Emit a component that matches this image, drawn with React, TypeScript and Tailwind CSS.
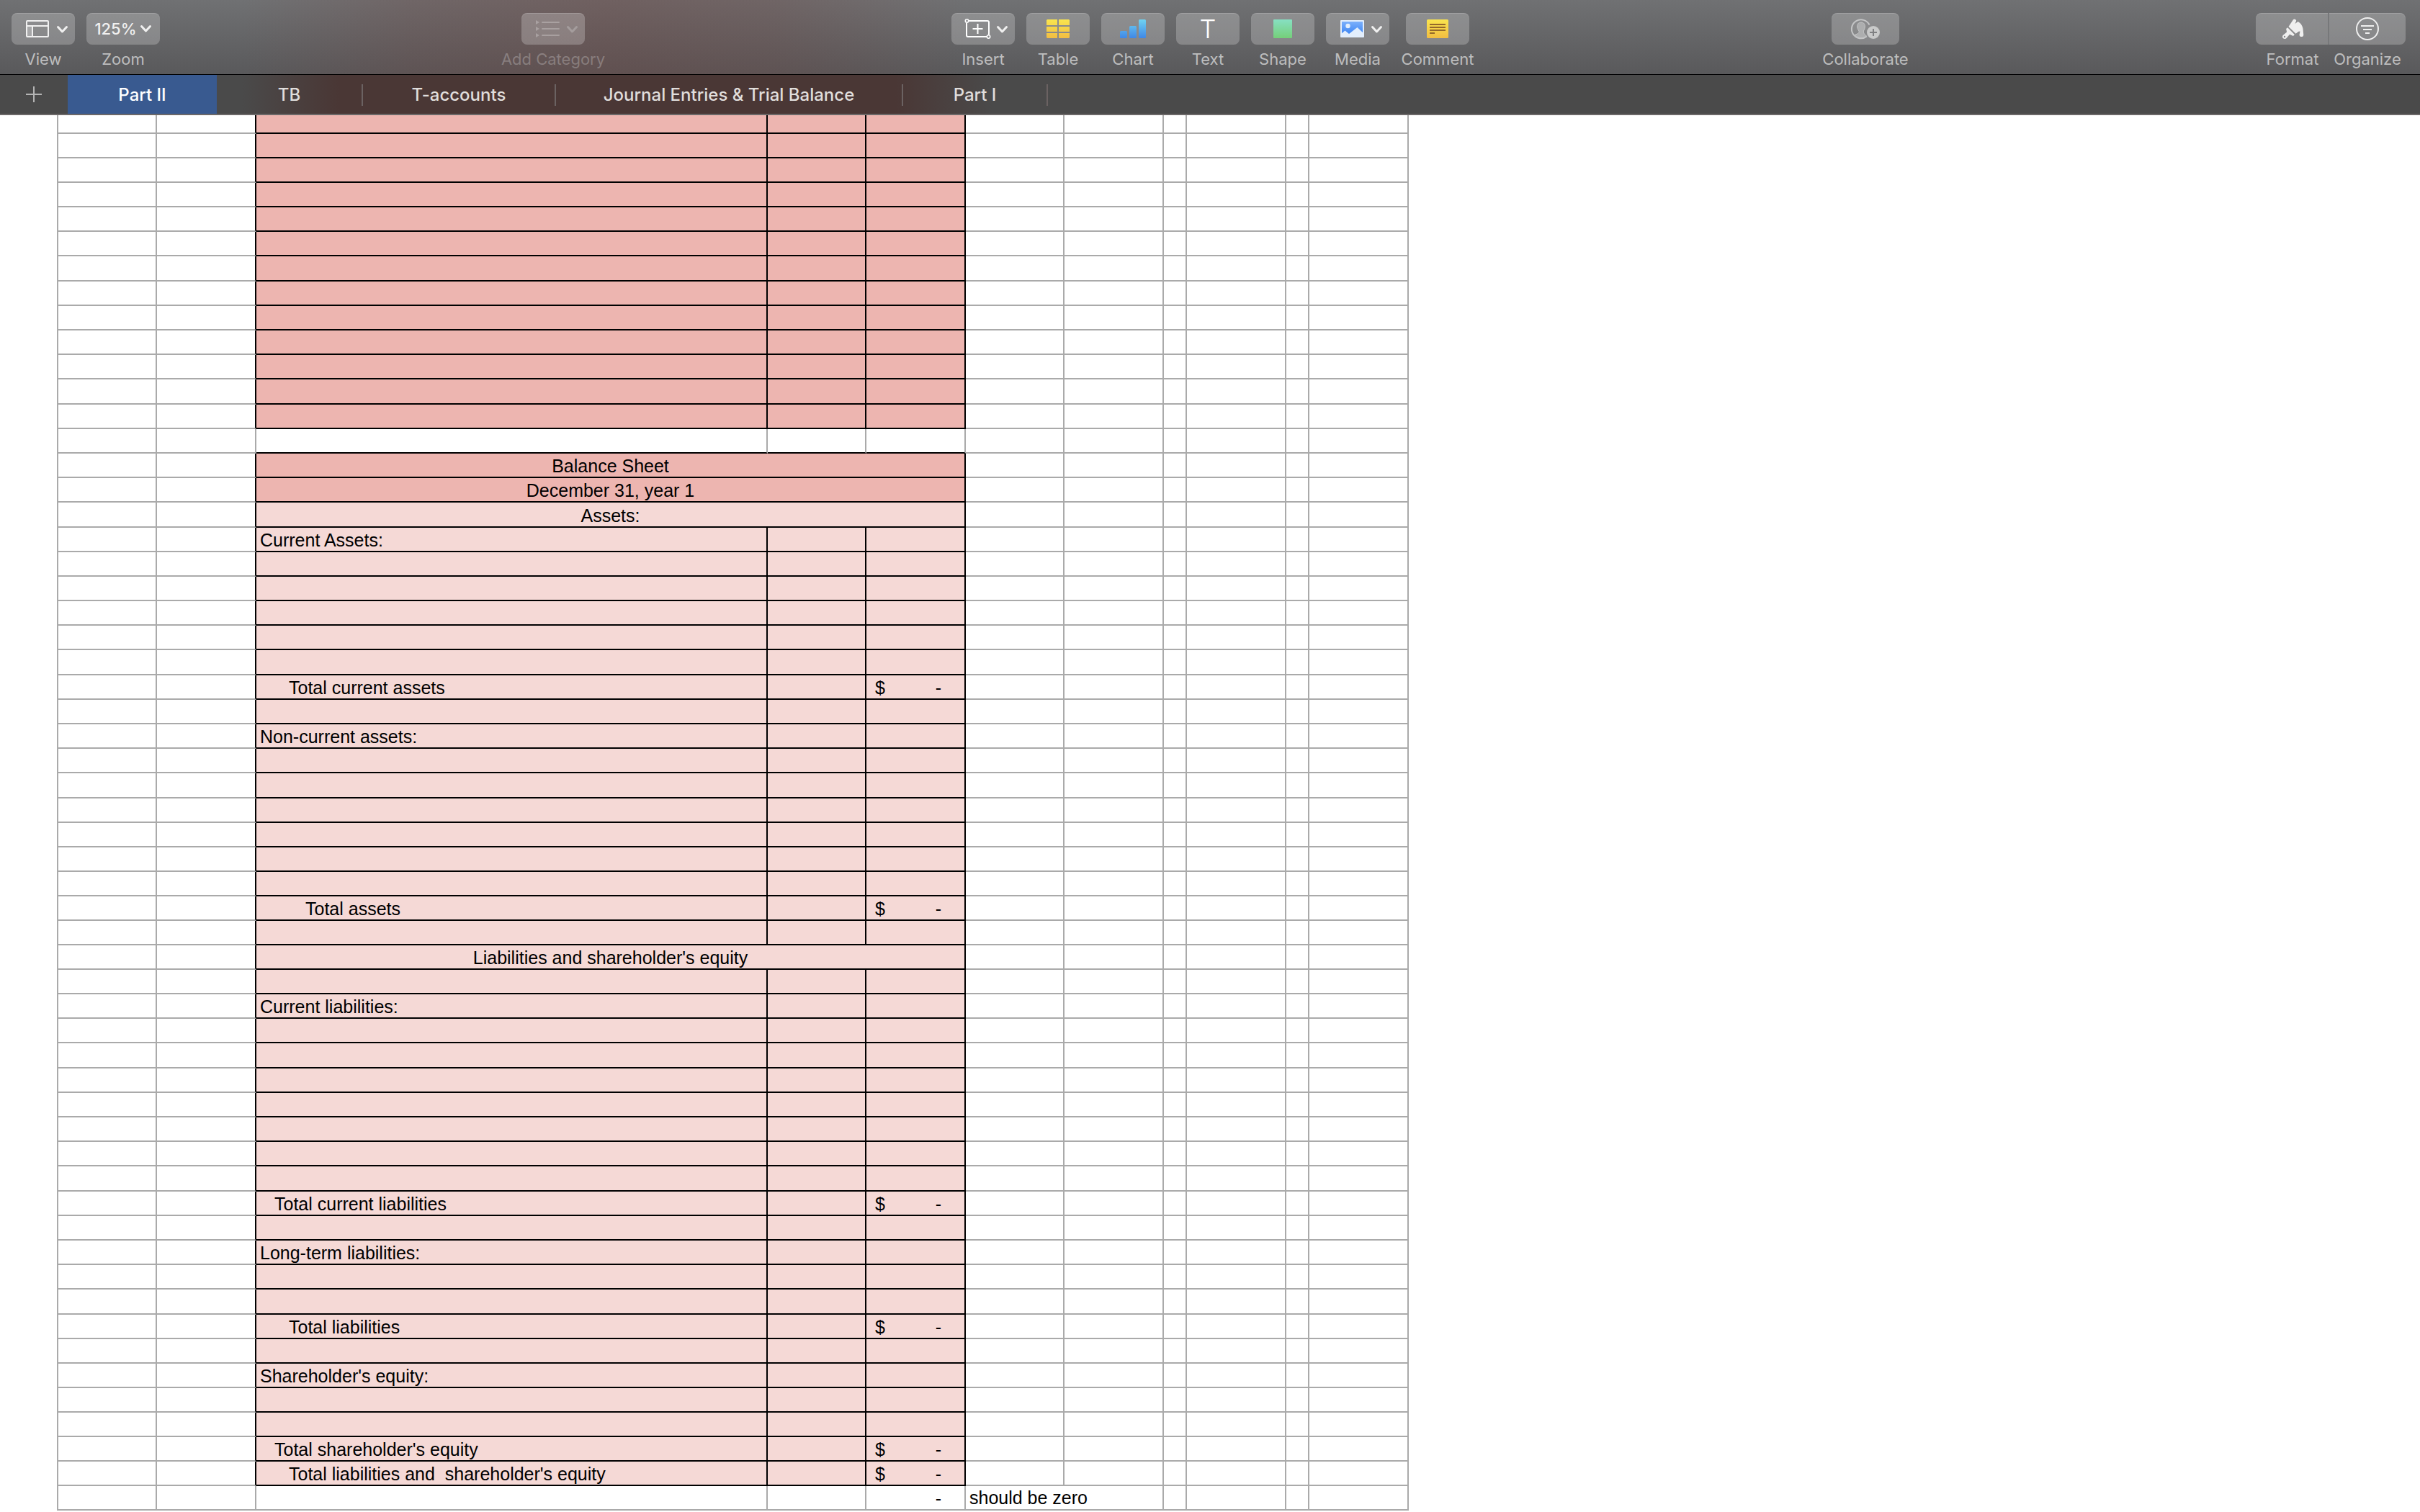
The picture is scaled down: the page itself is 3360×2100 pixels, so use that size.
import type { ReactNode } from "react";
import clsx from "clsx";

type Fill = "deep" | "light" | "none";

type SheetRow = {
  fill: Fill;
  label?: string;
  indent?: string;
  merged?: boolean;
  total?: string;
  note?: string;
  height?: string;
};

const TALL = "h-[35px]";

const blank = (fill: Fill, count: number): SheetRow[] =>
  Array.from({ length: count }, () => ({ fill }));

const rows: SheetRow[] = [
  { fill: "deep", height: "h-[26px]" },
  ...blank("deep", 5),
  { fill: "deep", height: TALL },
  ...blank("deep", 4),
  { fill: "deep", height: TALL },
  { fill: "deep" },
  { fill: "none" },
  { fill: "deep", label: "Balance Sheet", merged: true },
  { fill: "deep", label: "December 31, year 1", merged: true },
  { fill: "light", label: "Assets:", merged: true, height: TALL },
  { fill: "light", label: "Current Assets:" },
  ...blank("light", 4),
  { fill: "light", height: TALL },
  { fill: "light", label: "Total current assets", indent: "pl-[45px]", total: "$" },
  ...blank("light", 1),
  { fill: "light", label: "Non-current assets:" },
  ...blank("light", 1),
  { fill: "light", height: TALL },
  ...blank("light", 4),
  { fill: "light", label: "Total assets", indent: "pl-[68px]", total: "$" },
  ...blank("light", 1),
  { fill: "light", label: "Liabilities and shareholder's equity", merged: true },
  ...blank("light", 1),
  { fill: "light", label: "Current liabilities:" },
  ...blank("light", 1),
  { fill: "light", height: TALL },
  ...blank("light", 4),
  { fill: "light", height: TALL },
  { fill: "light", label: "Total current liabilities", indent: "pl-[25px]", total: "$" },
  ...blank("light", 1),
  { fill: "light", label: "Long-term liabilities:" },
  ...blank("light", 1),
  { fill: "light", height: TALL },
  { fill: "light", label: "Total liabilities", indent: "pl-[45px]", total: "$" },
  ...blank("light", 1),
  { fill: "light", label: "Shareholder's equity:" },
  ...blank("light", 2),
  { fill: "light", label: "Total shareholder's equity", indent: "pl-[25px]", total: "$" },
  { fill: "light", label: "Total liabilities and  shareholder's equity", indent: "pl-[45px]", total: "$" },
  { fill: "none", total: "", note: "should be zero" },
];

const fills: Record<Fill, string> = {
  deep: "bg-[#edb5b0]",
  light: "bg-[#f5d9d6]",
  none: "bg-white",
};

const Row = ({ row, next }: { row: SheetRow; next?: SheetRow }) => {
  const filled = row.fill !== "none";
  const ruled = filled || (next !== undefined && next.fill !== "none");
  const side = filled ? "border-r-black" : "border-r-[#aaaaaa]";
  const inner = clsx(
    "border-r-2 border-b-2 pt-[2px]",
    side,
    ruled ? "border-b-black" : "border-b-[#aaaaaa]",
    fills[row.fill]
  );
  const plain = "border-r-2 border-b-2 border-[#aaaaaa]";

  return (
    <tr className={row.height ?? "h-[34px]"}>
      <td className={clsx(plain, "border-l-2")} />
      <td className={clsx("border-r-2 border-b-2 border-b-[#aaaaaa]", side)} />
      {row.merged ? (
        <td colSpan={3} className={clsx(inner, "text-center")}>
          {row.label}
        </td>
      ) : (
        <>
          <td className={clsx(inner, row.indent ?? "pl-[5px]")}>{row.label}</td>
          <td className={inner} />
          <td className={inner}>
            {row.total !== undefined && (
              <div className="flex justify-between pl-3 pr-8">
                <span>{row.total}</span>
                <span>-</span>
              </div>
            )}
          </td>
        </>
      )}
      {row.note ? (
        <td colSpan={2} className={clsx(plain, "pl-[5px]")}>
          {row.note}
        </td>
      ) : (
        <>
          <td className={plain} />
          <td className={plain} />
        </>
      )}
      <td className={plain} />
      <td className={plain} />
      <td className={plain} />
      <td className={plain} />
    </tr>
  );
};

const Sheet = () => (
  <table className="ml-[79px] w-[1877px] table-fixed border-separate border-spacing-0 whitespace-pre font-['Liberation_Sans',Arial,sans-serif] text-[25px] leading-[30px] text-black">
    <colgroup>
      <col className="w-[139px]" />
      <col className="w-[138px]" />
      <col className="w-[710px]" />
      <col className="w-[137px]" />
      <col className="w-[138px]" />
      <col className="w-[137px]" />
      <col className="w-[138px]" />
      <col className="w-[32px]" />
      <col className="w-[138px]" />
      <col className="w-[32px]" />
      <col className="w-[138px]" />
    </colgroup>
    <tbody>
      {rows.map((row, i) => (
        <Row key={i} row={row} next={rows[i + 1]} />
      ))}
    </tbody>
  </table>
);

const Icon = ({ children, width = 88 }: { children: ReactNode; width?: number }) => (
  <svg width={width} height="44" viewBox={`0 0 ${width} 44`} fill="none" aria-hidden="true">
    {children}
  </svg>
);

const Chevron = () => (
  <path d="M64.5 19.5l6 6.5 6-6.5" stroke="#f0f0f0" strokeWidth="3" strokeLinecap="round" strokeLinejoin="round" />
);

const ViewIcon = () => (
  <Icon>
    <path d="M21 18h8v15h-8z" fill="#fff" fillOpacity=".25" />
    <rect x="21" y="11" width="30" height="22" rx="1" stroke="#f0f0f0" strokeWidth="2" />
    <path d="M21 18h30M29 18v15" stroke="#f0f0f0" strokeWidth="2" />
    <Chevron />
  </Icon>
);

const CategoryIcon = () => (
  <Icon>
    <path d="M20 10l5 3-5 3zM20 19l5 3-5 3zM20 28l5 3-5 3z" fill="#fff" />
    <path d="M29 13h23M29 22h23M29 31h23" stroke="#fff" strokeWidth="2" strokeLinecap="round" />
    <Chevron />
  </Icon>
);

const InsertIcon = () => (
  <Icon>
    <path d="M24 11h26a2 2 0 0 1 2 2v17M49 33H23a2 2 0 0 1-2-2V14" stroke="#fff" strokeWidth="2" />
    <circle cx="21.5" cy="11" r="2.2" stroke="#fff" strokeWidth="1.6" />
    <circle cx="51.5" cy="33" r="2.2" stroke="#fff" strokeWidth="1.6" />
    <path d="M29.5 22h14M36.5 15v14" stroke="#fff" strokeWidth="2" />
    <Chevron />
  </Icon>
);

const TableIcon = () => (
  <Icon>
    <defs>
      <linearGradient id="yellow" x1="0" y1="9" x2="0" y2="35" gradientUnits="userSpaceOnUse">
        <stop stopColor="#fae54e" />
        <stop offset="1" stopColor="#f1bd42" />
      </linearGradient>
    </defs>
    <path
      d="M29 9h14v8H28v-7zM45 9h14l1 1v7H45zM28 19h15v7H28zM45 19h15v7H45zM28 28h15v7H29l-1-1zM45 28h15v6l-1 1H45z"
      fill="url(#yellow)"
    />
  </Icon>
);

const ChartIcon = () => (
  <Icon>
    <defs>
      <linearGradient id="blue" x1="0" y1="9" x2="0" y2="35" gradientUnits="userSpaceOnUse">
        <stop stopColor="#70d3f1" />
        <stop offset="1" stopColor="#3f87e6" />
      </linearGradient>
    </defs>
    <g fill="url(#blue)">
      <rect x="26" y="25" width="10" height="10" rx="1.5" />
      <rect x="39" y="18" width="10" height="17" rx="1.5" />
      <rect x="52" y="9" width="10" height="26" rx="1.5" />
    </g>
  </Icon>
);

const ShapeIcon = () => (
  <Icon>
    <defs>
      <linearGradient id="green" x1="0" y1="0" x2="0" y2="1">
        <stop stopColor="#87e0c3" />
        <stop offset="1" stopColor="#75cf79" />
      </linearGradient>
    </defs>
    <rect x="31" y="9" width="26" height="26" rx="1" fill="url(#green)" />
  </Icon>
);

const MediaIcon = () => (
  <Icon>
    <defs>
      <linearGradient id="sky" x1="0" y1="0" x2="0" y2="1">
        <stop stopColor="#7cb0fb" />
        <stop offset="1" stopColor="#3d86f4" />
      </linearGradient>
    </defs>
    <rect x="20" y="10" width="33" height="24" rx="1" fill="#e2eefc" />
    <rect x="22" y="12" width="29" height="17" fill="url(#sky)" />
    <path d="M21 29l5.500-4.500 5.500 4.500 11.500-9 8.500 8v5H21z" fill="#e2eefc" />
    <circle cx="30.5" cy="18" r="3.2" fill="#e2eefc" />
    <Chevron />
  </Icon>
);

const CommentIcon = () => (
  <Icon>
    <rect x="29" y="9" width="30" height="26" rx="1.5" fill="url(#yellow)" />
    <path d="M33 16h22M33 20h22M33 24h22M33 28h7" stroke="#94692a" strokeWidth="2" />
  </Icon>
);

const CollaborateIcon = () => (
  <Icon width={94}>
    <path d="M52.5 16.5A13 13 0 1 0 49 32.500" stroke="#c4c5c6" strokeWidth="2" />
    <path
      d="M41 13c-4 0-5.500 2.800-5.300 6 .2 3 1.300 4.800 2.300 6 .6 2.500-.5 3.500-6 5.500 3 3 6 4 9 4s5-.8 7.500-2.500c-2.500-2-4.500-4-4.200-7 1-1.200 1.800-3 2-6 .2-3.200-1.300-6-5.300-6z"
      fill="#adaeaf"
      stroke="#c4c5c6"
    />
    <circle cx="58" cy="27" r="9" fill="#c9caca" />
    <path d="M53 27h10M58 22v10" stroke="#7f8082" strokeWidth="2" />
  </Icon>
);

const FormatIcon = () => (
  <Icon width={100}>
    <g fill="#efefef">
      <path d="M45.500 19L52 9.300c1.200-1.800 4-.6 4.200 1.500L54.500 15l4-3c3.500 1.500 6.500 6 7 10l.8 8.500c0 3.300-5.600 3.500-5.800 0l1-5-2 .2-4 3z" />
      <path d="M44.200 20.300l9.600 9.800-1.800 1.900-5-2.200-4 4.700c-3 3.400-7.800.4-5.300-3.400l5.400-4.600-1-4.500z" />
    </g>
    <circle cx="40" cy="33" r="1.2" fill="#88898b" />
  </Icon>
);

const OrganizeIcon = () => (
  <Icon width={106}>
    <circle cx="53" cy="22" r="15" stroke="#efefef" strokeWidth="2" />
    <path d="M44 18h18M47 23h12M50 28h6" stroke="#efefef" strokeWidth="2" />
  </Icon>
);

const face = "flex h-11 items-center justify-center bg-white/23 shadow-[inset_0_1px_0_rgba(255,255,255,0.18)]";

type ToolProps = {
  label: string;
  children: ReactNode;
  width?: string;
  faceWidth?: string;
  disabled?: boolean;
};

const Tool = ({ label, children, width = "w-[88px]", faceWidth = "w-[88px]", disabled }: ToolProps) => (
  <button
    type="button"
    disabled={disabled}
    className={clsx("flex shrink-0 flex-col items-center gap-[6px]", width)}
  >
    <span className={clsx(face, "rounded-lg", faceWidth)}>
      <span className={clsx("flex items-center", disabled && "opacity-25")}>{children}</span>
    </span>
    <span className={clsx("whitespace-nowrap", disabled ? "text-white/25" : "text-white/60")}>{label}</span>
  </button>
);

const Toolbar = () => (
  <header className="flex h-[104px] items-start border-b border-black bg-[linear-gradient(to_right,transparent_10%,rgba(110,62,58,0.22)_17%,rgba(110,62,58,0.33)_25%,rgba(110,62,58,0.24)_32%,transparent_40%),linear-gradient(#707173,#59595b)] pt-[18px] pr-5 pl-4 text-[22px] leading-[28px]">
    <div className="flex gap-4">
      <Tool label="View">
        <ViewIcon />
      </Tool>
      <Tool label="Zoom" width="w-[102px]" faceWidth="w-[102px]">
        <span className="flex items-center gap-1 font-medium text-[#f0f0f0]">
          125%
          <svg width="17" height="12" viewBox="0 0 17 12" fill="none" aria-hidden="true">
            <path d="M2.500 2.500l6 6.500 6-6.500" stroke="#f0f0f0" strokeWidth="3" strokeLinecap="round" strokeLinejoin="round" />
          </svg>
        </span>
      </Tool>
    </div>
    <div className="grow-[502]" />
    <Tool label="Add Category" disabled>
      <CategoryIcon />
    </Tool>
    <div className="grow-[509]" />
    <div className="flex gap-4">
      <Tool label="Insert">
        <InsertIcon />
      </Tool>
      <Tool label="Table">
        <TableIcon />
      </Tool>
      <Tool label="Chart">
        <ChartIcon />
      </Tool>
      <Tool label="Text">
        <span className="text-[36px] font-light text-white">T</span>
      </Tool>
      <Tool label="Shape">
        <ShapeIcon />
      </Tool>
      <Tool label="Media">
        <MediaIcon />
      </Tool>
      <Tool label="Comment" width="w-[102px]">
        <CommentIcon />
      </Tool>
    </div>
    <div className="grow-[496]" />
    <Tool label="Collaborate" width="w-[94px]" faceWidth="w-[94px]">
      <CollaborateIcon />
    </Tool>
    <div className="grow-[495]" />
    <div className="flex">
      <button type="button" className="flex flex-col items-center gap-[6px]">
        <span className={clsx(face, "w-[102px] rounded-l-lg border-r-2 border-[#77787a]")}>
          <FormatIcon />
        </span>
        <span className="text-white/60">Format</span>
      </button>
      <button type="button" className="flex flex-col items-center gap-[6px]">
        <span className={clsx(face, "w-[106px] rounded-r-lg")}>
          <OrganizeIcon />
        </span>
        <span className="text-white/60">Organize</span>
      </button>
    </div>
  </header>
);

const tabs = [
  { name: "Part II", width: "w-[207px]" },
  { name: "TB", width: "w-[203px]" },
  { name: "T-accounts", width: "w-[268px]" },
  { name: "Journal Entries & Trial Balance", width: "w-[482px]" },
  { name: "Part I", width: "w-[201px]" },
];

const TabBar = () => (
  <nav className="flex h-14 border-b-2 border-[#6b6868] bg-[linear-gradient(to_right,#4a4a4a_10%,#4a3735_14%,#4a3735_37%,#4a4a4a_41%)] text-[24px] leading-[30px]">
    <button type="button" aria-label="Add sheet" className="flex w-[94px] items-center justify-center">
      <svg width="22" height="22" viewBox="0 0 22 22" aria-hidden="true">
        <path d="M0 11h22M11 0v22" stroke="#b4b4b4" strokeWidth="2" />
      </svg>
    </button>
    {tabs.map((tab, i) => (
      <button
        key={tab.name}
        type="button"
        className={clsx(
          "flex items-center pt-[2px] whitespace-nowrap font-medium",
          tab.width,
          i === 0 ? "bg-[#395a90] text-white" : "text-[#e0dedc]"
        )}
      >
        <span className="grow text-center">{tab.name}</span>
        {i > 0 && <span className="h-[30px] w-[2px] bg-[#6b6262]" />}
      </button>
    ))}
  </nav>
);

const App = () => (
  <div className="min-h-screen bg-white font-['Inter',sans-serif]">
    <Toolbar />
    <TabBar />
    <main>
      <Sheet />
    </main>
  </div>
);

export default App;
